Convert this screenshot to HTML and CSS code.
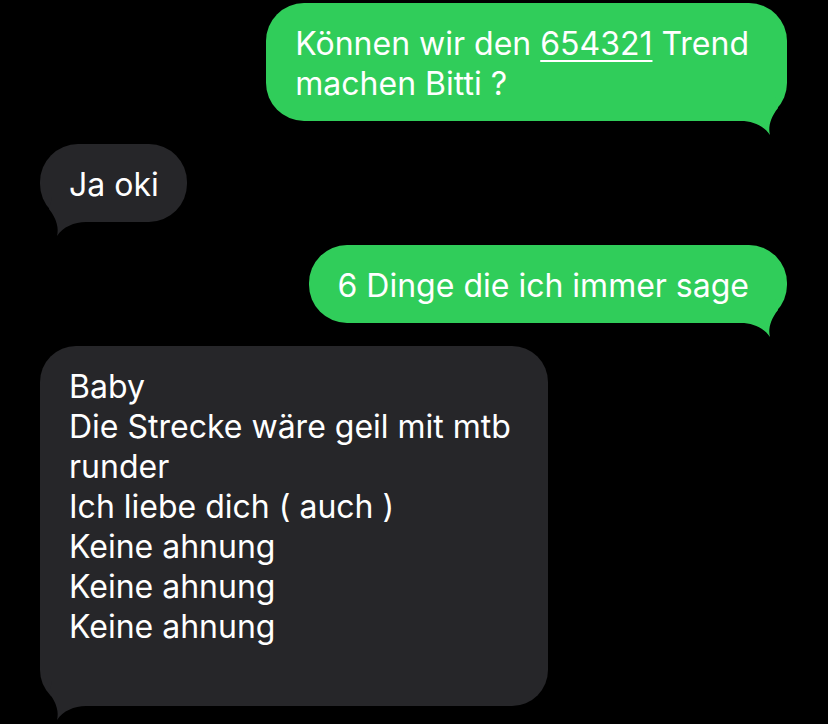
FILE: index.html
```html
<html>
<head>
    <title>Nachrichten</title>
    <meta charset="utf-8">
    <link rel="stylesheet" href="styles.css">
</head>
<body>
    <div id="thread">

        <div class="bubble sent">
            Können wir den <span class="num">654321</span> Trend<br>machen Bitti ?
            <svg class="tail" viewBox="0 0 50 40" width="50" height="40"><path d="M4 25 C16 25 27 30 33 39 C31 32 33 22 41 12 L38 0 L4 0 Z"/></svg>
        </div>

        <div class="bubble received">
            Ja oki
            <svg class="tail" viewBox="0 0 50 40" width="50" height="40"><path d="M4 25 C16 25 27 30 33 39 C31 32 33 22 41 12 L38 0 L4 0 Z"/></svg>
        </div>

        <div class="bubble sent">
            6 Dinge die ich immer sage
            <svg class="tail" viewBox="0 0 50 40" width="50" height="40"><path d="M4 25 C16 25 27 30 33 39 C31 32 33 22 41 12 L38 0 L4 0 Z"/></svg>
        </div>

        <div class="bubble received long">
            Baby<br>
            Die Strecke wäre geil mit mtb<br>
            runder<br>
            Ich liebe dich ( auch )<br>
            Keine ahnung<br>
            Keine ahnung<br>
            Keine ahnung
            <svg class="tail" viewBox="0 0 50 40" width="50" height="40"><path d="M4 25 C16 25 27 30 33 39 C31 32 33 22 41 12 L38 0 L4 0 Z"/></svg>
        </div>

    </div>
</body>
</html>
```

FILE: styles.css
```css
body {
    background: #000000;
    color: #FFFFFF;
    font-family: Inter, 'Noto Sans', sans-serif;
    margin: 0px;
    padding: 0px;
}

#thread {
    display: flex;
    flex-direction: column;
    gap: 23px;
    padding: 3px 41px 0px 40px;
}

.bubble {
    position: relative;
    font-size: 32px;
    line-height: 40px;
    border-radius: 38px;
    white-space: nowrap;
}

.sent {
    align-self: flex-end;
    background: #30CD5A;
    padding: 21px 38px 17px 29px;
}

.received {
    align-self: flex-start;
    background: #262629;
    padding: 21px 28px 17px 29px;
}

.long {
    border-radius: 36px;
    padding-right: 37px;
    padding-bottom: 59px;
}

.num {
    text-decoration: underline;
    text-decoration-thickness: 1.5px;
    text-underline-offset: 5px;
}

.tail {
    position: absolute;
    bottom: -15px;
}

.sent .tail {
    right: 0px;
    fill: #30CD5A;
}

.received .tail {
    left: 0px;
    fill: #262629;
    transform: scaleX(-1);
}
```
